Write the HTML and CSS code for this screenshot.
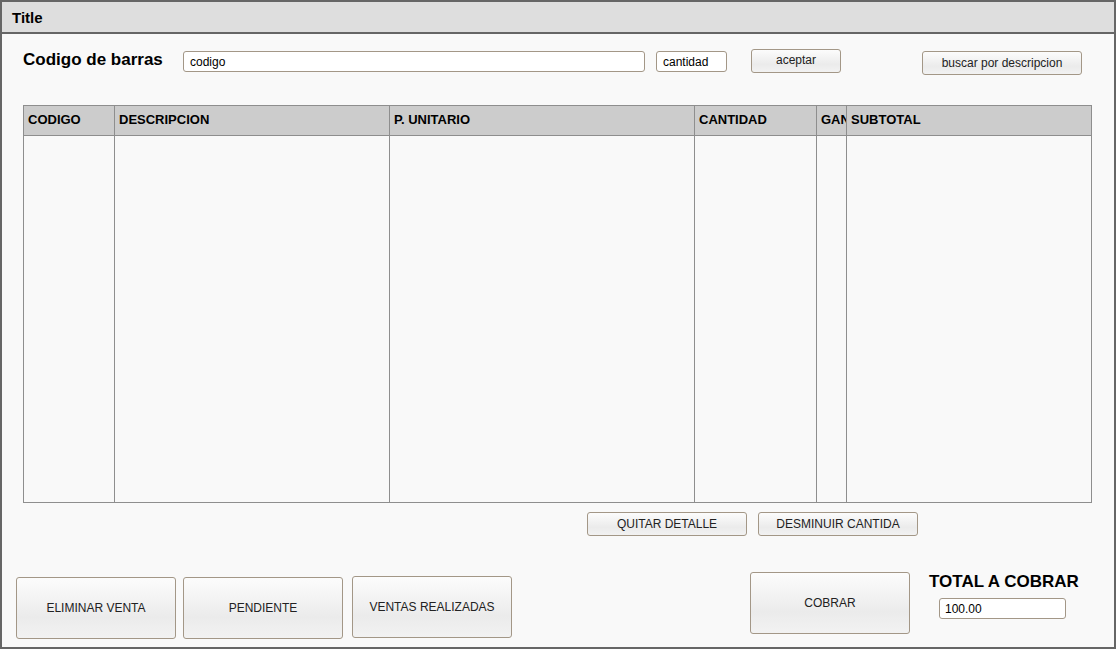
FILE: index.html
```html
<!DOCTYPE html>
<html lang="es">
<head>
<meta charset="utf-8">
<title>Title</title>
<link rel="stylesheet" href="styles.css">
</head>
<body>
<div class="window">
  <div class="titlebar">Title</div>
  <div class="content">
    <div class="top-row">
      <div class="label-big barcode-label">Codigo de barras</div>
      <div class="input input-codigo">codigo</div>
      <div class="input input-cantidad">cantidad</div>
      <div class="btn btn-aceptar">aceptar</div>
      <div class="btn btn-buscar">buscar por descripcion</div>
    </div>

    <div class="table">
      <div class="trow thead">
        <div class="cell">CODIGO</div>
        <div class="cell">DESCRIPCION</div>
        <div class="cell">P. UNITARIO</div>
        <div class="cell">CANTIDAD</div>
        <div class="cell">GANANCIA</div>
        <div class="cell">SUBTOTAL</div>
      </div>
      <div class="trow tbody">
        <div class="cell"></div>
        <div class="cell"></div>
        <div class="cell"></div>
        <div class="cell"></div>
        <div class="cell"></div>
        <div class="cell"></div>
      </div>
    </div>

    <div class="detail-row">
      <div class="btn btn-small">QUITAR DETALLE</div>
      <div class="btn btn-small btn-desminuir">DESMINUIR CANTIDA</div>
    </div>

    <div class="bottom-row">
      <div class="btn btn-big btn-eliminar">ELIMINAR VENTA</div>
      <div class="btn btn-big btn-pendiente">PENDIENTE</div>
      <div class="btn btn-big btn-ventas">VENTAS REALIZADAS</div>
      <div class="btn btn-big btn-cobrar">COBRAR</div>
      <div class="total-group">
        <div class="label-big">TOTAL A COBRAR</div>
        <div class="input input-total">100.00</div>
      </div>
    </div>
  </div>
</div>
</body>
</html>
```

FILE: styles.css
```css
* { box-sizing: border-box; }

html, body {
  margin: 0;
  padding: 0;
  background: #f9f9f9;
}

body {
  font-family: "Liberation Sans", Arial, sans-serif;
  color: #000;
}

.window {
  width: 1116px;
  height: 649px;
  border: 2px solid #666666;
  background: #f9f9f9;
  overflow: hidden;
}

.titlebar {
  height: 32px;
  background: #dedede;
  border-bottom: 2px solid #666666;
  font-size: 15px;
  font-weight: bold;
  line-height: 31px;
  padding-left: 10px;
}

.content {
  padding-left: 21px;
}

.top-row {
  display: flex;
  align-items: flex-start;
  margin-top: 15px;
  height: 56px;
}

.label-big {
  font-size: 17px;
  font-weight: bold;
  line-height: 19px;
}

.barcode-label {
  width: 160px;
  margin-top: 1px;
}

.input {
  background: #ffffff;
  border: 1px solid #a39787;
  border-radius: 3px;
  height: 21px;
  font-size: 12px;
  line-height: 20px;
  padding-left: 6px;
  color: #000;
}

.input-codigo {
  width: 462px;
  margin-top: 2px;
}

.input-cantidad {
  width: 71px;
  margin-left: 11px;
  margin-top: 2px;
}

.btn {
  display: flex;
  align-items: center;
  justify-content: center;
  border: 1px solid #a39787;
  border-radius: 3px;
  background: linear-gradient(to bottom, #fcfcfc 0%, #f3f3f3 35%, #ebebeb 65%, #f2f2f2 100%);
  font-size: 12px;
  color: #222;
  white-space: nowrap;
}

.btn-aceptar {
  width: 90px;
  height: 24px;
  margin-left: 24px;
  padding-bottom: 2px;
}

.btn-buscar {
  width: 160px;
  height: 24px;
  margin-left: 81px;
  margin-top: 2px;
}

.table {
  width: 1069px;
  height: 398px;
  border: 1px solid #8e8e8e;
  display: flex;
  flex-direction: column;
}

.trow {
  display: grid;
  grid-template-columns: 90px 275px 305px 122px 30px 244px;
}

.thead {
  height: 30px;
  background: #cccccc;
  border-bottom: 1px solid #8e8e8e;
}

.tbody {
  flex: 1;
}

.cell {
  border-left: 1px solid #8e8e8e;
  overflow: hidden;
  white-space: nowrap;
}

.cell:first-child {
  border-left: none;
}

.thead .cell {
  font-size: 13px;
  font-weight: bold;
  line-height: 28px;
  padding-left: 4px;
}

.detail-row {
  display: flex;
  margin-top: 9px;
  padding-left: 564px;
}

.btn-small {
  width: 160px;
  height: 24px;
}

.btn-desminuir {
  margin-left: 11px;
}

.bottom-row {
  display: flex;
  align-items: flex-start;
  margin-top: 36px;
  margin-left: -7px;
}

.btn-big {
  width: 160px;
  height: 62px;
}

.btn-eliminar { margin-top: 5px; }
.btn-pendiente { margin-top: 5px; margin-left: 7px; }
.btn-ventas { margin-top: 4px; margin-left: 9px; }
.btn-cobrar { margin-left: 238px; }

.total-group {
  margin-left: 19px;
  margin-top: 0px;
}

.input-total {
  width: 127px;
  margin-left: 10px;
  margin-top: 7px;
  padding-left: 5px;
}
```
